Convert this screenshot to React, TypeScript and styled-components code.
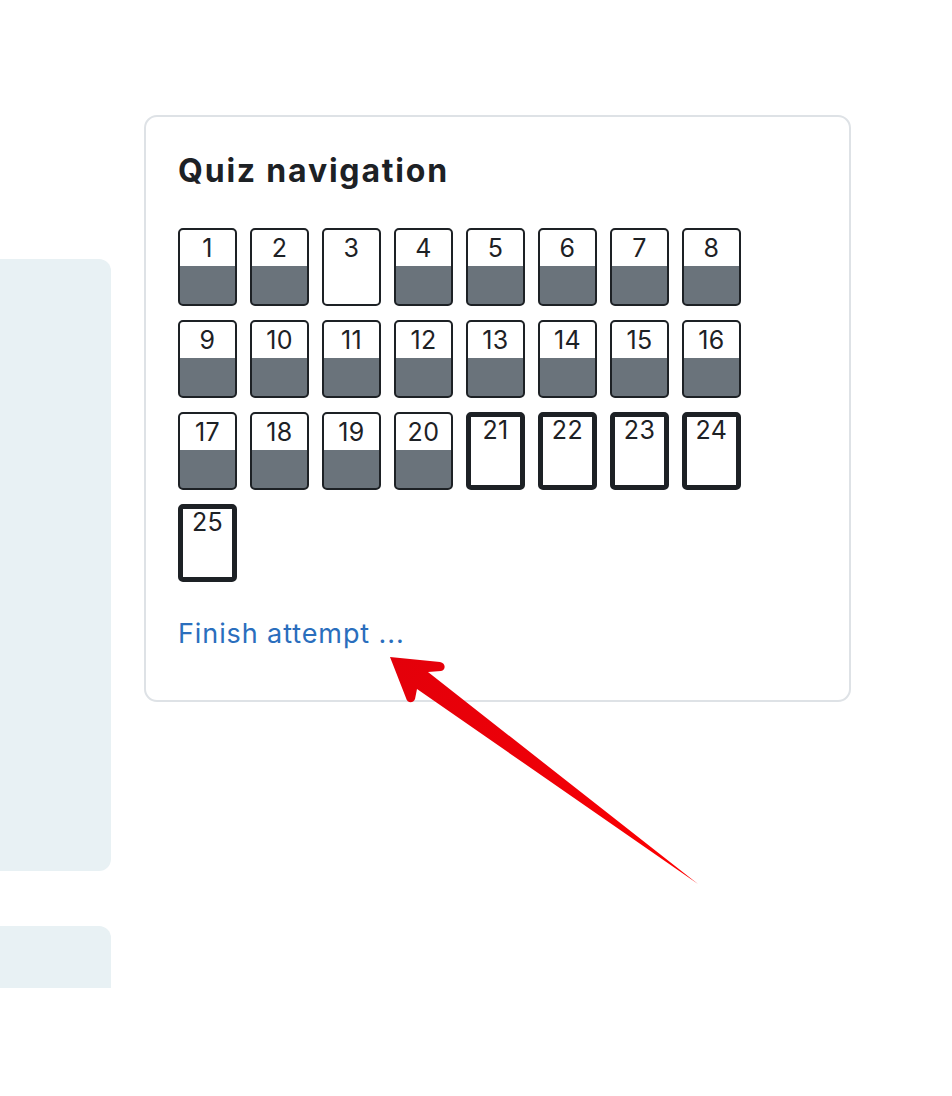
import React from "react";
import styled, { createGlobalStyle } from "styled-components";

const GlobalStyle = createGlobalStyle`
  html, body { margin: 0; padding: 0; background: #ffffff; }
  body { font-family: Inter, "Noto Sans", "Liberation Sans", sans-serif; color: #1d2125; }
`;

const Page = styled.div`
  position: relative;
  width: 952px;
  height: 1096px;
  display: flex;
  align-items: flex-start;
  gap: 33px;
  overflow: hidden;
`;

const SideColumn = styled.div`
  width: 111px;
  flex: none;
  display: flex;
  flex-direction: column;
  gap: 55px;
  padding-top: 259px;
`;

const SidePanel = styled.div<{ $h: number; $cut?: boolean }>`
  height: ${(p) => p.$h}px;
  background: #e8f1f4;
  border-radius: ${(p) => (p.$cut ? "0 12px 0 0" : "0 12px 12px 0")};
`;

const Card = styled.section`
  margin-top: 115px;
  width: 707px;
  height: 587px;
  box-sizing: border-box;
  border: 2px solid #dee2e6;
  border-radius: 13px;
  padding: 35px 32px 0 32px;
`;

const Title = styled.h2`
  margin: 0;
  font-size: 32px;
  line-height: 38px;
  font-weight: 700;
  color: #1d2125;
  letter-spacing: 1.8px;
`;

const Grid = styled.div`
  margin-top: 38px;
  display: grid;
  grid-template-columns: repeat(8, 59px);
  column-gap: 13px;
  row-gap: 14px;
`;

const QButton = styled.div<{ $current?: boolean; $answered?: boolean }>`
  box-sizing: border-box;
  width: 59px;
  height: 78px;
  border-radius: 5px;
  border: ${(p) => (p.$current ? "5px" : "2px")} solid #1d2125;
  background: ${(p) =>
    p.$answered ? "linear-gradient(to bottom, #ffffff 0 48%, #6a737b 48% 100%)" : "#ffffff"};
  text-align: center;
  font-size: 25px;
  letter-spacing: 0.4px;
  line-height: ${(p) => (p.$current ? "26px" : "30px")};
  padding-top: ${(p) => (p.$current ? "0" : "3px")};
  color: #1d2125;
`;

const FinishLink = styled.a`
  display: inline-block;
  margin-top: 35px;
  font-size: 27px;
  line-height: 34px;
  letter-spacing: 0.9px;
  color: #2a6ebd;
  text-decoration: none;
`;

const ArrowSvg = styled.svg`
  position: absolute;
  left: 0;
  top: 0;
  pointer-events: none;
`;

const questions = Array.from({ length: 25 }, (_, i) => i + 1);

export default function App() {
  return (
    <>
      <GlobalStyle />
      <Page>
        <SideColumn>
          <SidePanel $h={612} />
          <SidePanel $h={62} $cut />
        </SideColumn>
        <Card>
          <Title>Quiz navigation</Title>
          <Grid>
            {questions.map((n) => (
              <QButton key={n} $answered={n <= 20 && n !== 3} $current={n >= 21}>
                {n}
              </QButton>
            ))}
          </Grid>
          <FinishLink href="#">Finish attempt ...</FinishLink>
        </Card>
        <ArrowSvg width="952" height="1096" viewBox="0 0 952 1096">
          <defs>
            <linearGradient id="arrowGrad" x1="390" y1="657" x2="698" y2="884" gradientUnits="userSpaceOnUse">
              <stop offset="0" stopColor="#e3000a" />
              <stop offset="0.5" stopColor="#ee0008" />
              <stop offset="1" stopColor="#ff0000" />
            </linearGradient>
          </defs>
          <path
            d="M390,657 L440,662 C446,663 446,670 441,671 L428,672 L698,884 L417,689 L415,699 C413,704 407,703 406,698 Z"
            fill="url(#arrowGrad)"
          />
        </ArrowSvg>
      </Page>
    </>
  );
}
